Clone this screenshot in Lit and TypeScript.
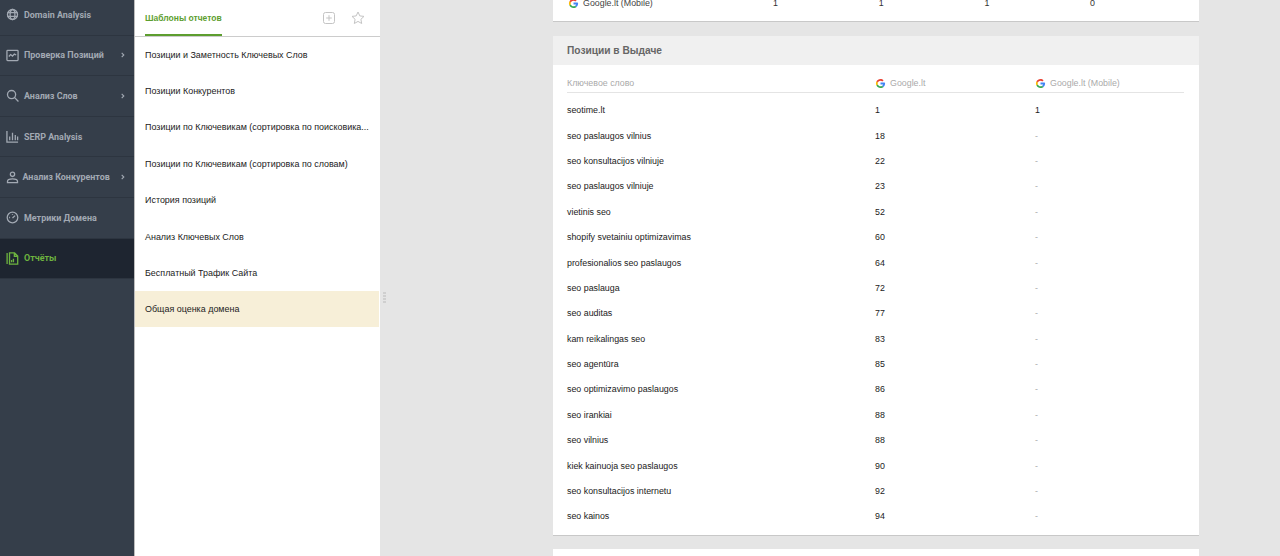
import { LitElement, html, css, svg } from "lit";
import { customElement } from "lit/decorators.js";

const ICONS: Record<string, unknown> = {
  globe: svg`<circle cx="7" cy="7" r="5.400"/><ellipse cx="7" cy="7" rx="2.600" ry="5.400"/><path d="M1.600 5h10.800M1.600 9h10.800"/>`,
  chart: svg`<rect x="1" y="1.500" width="12" height="11" rx=".8"/><path d="M3 8l2-2 2 1.600L9 5.500l2 1"/>`,
  search: svg`<circle cx="6" cy="6" r="4.400"/><path d="M9.300 9.300L13.400 13.400"/>`,
  bars: svg`<path d="M1 1v12h12M4 11V7M7 11V3M10 11V5.500M12.500 11V7"/>`,
  user: svg`<circle cx="7" cy="3.600" r="2.300"/><path d="M1.600 12.600v-1.400c0-1.800 2-2.700 5.400-2.700s5.400.9 5.400 2.700v1.400z"/>`,
  gauge: svg`<circle cx="7" cy="7" r="5.700"/><path d="M7 7.600l2.800-2.600M3.400 7h1M7 3.400v1"/>`,
  report: svg`<path d="M1.200 1.200v11.600M3.800 1h5.400l3.400 3.400V13H3.800zM9 1v3.600h3.600M6 11V8.600M8 11V7.400"/>`,
};

const G = svg`<path fill="#fbbc05" d="M6.300 14.700C4.900 17.400 4 20.600 4 24s.9 6.500 2.200 9.100l6.500-5C12.200 26.800 12 25.400 12 24s.3-3.100.9-4.500z"/><path fill="#ea4335" d="M6.300 14.700l6.600 4.800C14.700 15.100 19 12 24 12c3.100 0 5.800 1.200 7.900 3l5.700-5.700C34 6.100 29.300 4 24 4 16.300 4 9.700 8.300 6.300 14.700z"/><path fill="#34a853" d="M24 44c5.200 0 9.900-2 13.400-5.200l-6.200-5.200C29.200 35.100 26.700 36 24 36c-5.200 0-9.600-3.300-11.300-7.900l-6.500 5C9.500 39.600 16.200 44 24 44z"/><path fill="#4285f4" d="M43.600 20.500H42V20H24v8h11.300c-.8 2.200-2.200 4.200-4.100 5.600l6.200 5.200C37 39.200 44 34 44 24c0-1.300-.1-2.700-.4-3.500z"/>`;

const NAV = [
  { t: "Domain Analysis", i: "globe" },
  { t: "Проверка Позиций", i: "chart", a: 1 },
  { t: "Анализ Слов", i: "search", a: 1 },
  { t: "SERP Analysis", i: "bars" },
  { t: "Анализ Конкурентов", i: "user", a: 1, tight: 1 },
  { t: "Метрики Домена", i: "gauge" },
  { t: "Отчёты", i: "report", on: 1 },
];

const TEMPLATES = [
  "Позиции и Заметность Ключевых Слов",
  "Позиции Конкурентов",
  "Позиции по Ключевикам (сортировка по поисковика...",
  "Позиции по Ключевикам (сортировка по словам)",
  "История позиций",
  "Анализ Ключевых Слов",
  "Бесплатный Трафик Сайта",
  "Общая оценка домена",
];

const ROWS: [string, string, string][] = [
  ["seotime.lt", "1", "1"],
  ["seo paslaugos vilnius", "18", "-"],
  ["seo konsultacijos vilniuje", "22", "-"],
  ["seo paslaugos vilniuje", "23", "-"],
  ["vietinis seo", "52", "-"],
  ["shopify svetainiu optimizavimas", "60", "-"],
  ["profesionalios seo paslaugos", "64", "-"],
  ["seo paslauga", "72", "-"],
  ["seo auditas", "77", "-"],
  ["kam reikalingas seo", "83", "-"],
  ["seo agentūra", "85", "-"],
  ["seo optimizavimo paslaugos", "86", "-"],
  ["seo irankiai", "88", "-"],
  ["seo vilnius", "88", "-"],
  ["kiek kainuoja seo paslaugos", "90", "-"],
  ["seo konsultacijos internetu", "92", "-"],
  ["seo kainos", "94", "-"],
];

@customElement("app-root")
export class AppRoot extends LitElement {
  static styles = css`
    :host { display: block; width: 1280px; height: 556px; overflow: hidden; background: #e5e5e5;
      font-family: "Liberation Sans", Arial, sans-serif; color: #222; }
    .layout { display: flex; height: 556px; }
    .side { width: 134px; flex: none; background: #353e4a; overflow: hidden; }
    .nav { margin-top: -5px; }
    .nav-item { height: 40.6px; box-sizing: border-box; display: flex; align-items: center; padding: 0 9.5px 0 6px;
      border-bottom: 1px solid #2d3540; color: #a2a9b3; font: 700 8.95px Roboto, sans-serif; }
    .nav-item.on { background: #1e2530; color: #6db33f; }
    .nav-icon { width: 13px; height: 13px; flex: none; margin-right: 5px; fill: none; stroke: currentColor; stroke-width: 1.4; }
    .nav-label { flex: 1; white-space: nowrap; }
    .tight .nav-label { margin-left: -1.5px; }
    .chev { width: 3.500px; height: 6px; fill: none; stroke: currentColor; stroke-width: 1.6; flex: none; }
    .panel { width: 245px; flex: none; border-left: 1px solid #bdbdbd; background: #fff; }
    .tabs { height: 36px; display: flex; align-items: stretch; padding-left: 10px; border-bottom: 1px solid #ccc; }
    .tab { color: #5d9e2f; font-weight: 700; font-size: 8.5px; display: flex; align-items: center; border-bottom: 2px solid #5d9e2f; padding-top: 1px; box-sizing: border-box; height: 36px; }
    .tab-icons { margin-left: auto; display: flex; align-items: center; gap: 15px; padding-right: 15px; }
    .tab-icons svg { width: 14px; height: 14px; fill: none; stroke: #c4c4c4; stroke-width: 1; }
    .list { margin-top: -0.6px; }
    .tpl { height: 36.4px; display: flex; align-items: center; padding-left: 10px; font-size: 8.95px; color: #222; white-space: nowrap; box-sizing: border-box; margin-right: 1px; }
    .tpl.sel { background: #f7efd8; height: 35.6px; }
    .grip { width: 173px; flex: none; display: flex; align-items: flex-start; }
    .dots { margin: 292px 0 0 3px; display: grid; gap: 1px; }
    .dots i { display: block; width: 3px; height: 2px; background: #cfcfcf; }
    .main { flex: 1; overflow: hidden; }
    .card { width: 646px; background: #fff; border-bottom: 1px solid #c8c8c8; }
    .card-top { height: 21px; display: flex; align-items: flex-start; font-size: 8.85px; color: #333; }
    .top-name { display: flex; align-items: center; width: 205px; padding-left: 15px; height: 6px; gap: 4px; color: #444; }
    .top-num { width: 105.7px; height: 6px; display: flex; align-items: center; }
    .g { width: 11px; height: 11px; flex: none; }
    .card-pos { margin-top: 14px; }
    .card-title { height: 29px; background: #f0f0f0; display: flex; align-items: center; padding-left: 14px; font-size: 10.2px; font-weight: 700; color: #666; }
    .body { padding: 9px 15px 5.5px 14px; }
    .row { display: grid; grid-template-columns: 308px 160px 1fr; align-items: center; height: 25.4px; font-size: 8.85px; color: #222; }
    .head { height: 18px; border-bottom: 1px solid #e4e4e4; color: #aaa; margin-bottom: 4.5px; }
    .head span { display: flex; align-items: center; gap: 4px; }
    .dash { color: #aaa; }
    .card-next { margin-top: 13.5px; height: 40px; border: 0; }
  `;

  render() {
    const dots = [0, 1, 2, 3];
    const g = html`<svg class="g" viewBox="0 0 48 48">${G}</svg>`;
    return html`<div class="layout">
      <nav class="side"><div class="nav">
        ${NAV.map((n) => html`<div class="nav-item ${n.on ? "on" : ""} ${n.tight ? "tight" : ""}">
          <svg class="nav-icon" viewBox="0 0 14 14">${ICONS[n.i]}</svg>
          <span class="nav-label">${n.t}</span>
          ${n.a ? html`<svg class="chev" viewBox="0 0 5 8"><path d="M1 1l3 3-3 3"/></svg>` : ""}
        </div>`)}
      </div></nav>
      <section class="panel">
        <div class="tabs">
          <div class="tab">Шаблоны отчетов</div>
          <div class="tab-icons">
            <svg viewBox="0 0 14 14"><rect x="1.500" y="1.500" width="11" height="11" rx="2"/><path d="M7 4.200v5.600M4.200 7h5.600"/></svg>
            <svg viewBox="0 0 14 14"><path d="M7 1l1.800 3.900 4.200.5-3.100 2.900.8 4.200L7 10.400l-3.700 2.100.8-4.200L1 5.400l4.200-.5z"/></svg>
          </div>
        </div>
        <div class="list">${TEMPLATES.map((t, i) => html`<div class="tpl ${i === 7 ? "sel" : ""}">${t}</div>`)}</div>
      </section>
      <div class="grip"><div class="dots">${dots.map(() => html`<i></i>`)}</div></div>
      <main class="main">
        <div class="card card-top">
          <div class="top-name">${g}Google.lt (Mobile)</div>
          <div class="top-num">1</div><div class="top-num">1</div><div class="top-num">1</div><div class="top-num">0</div>
        </div>
        <div class="card card-pos">
          <div class="card-title">Позиции в Выдаче</div>
          <div class="body">
            <div class="row head">
              <span>Ключевое слово</span>
              <span>${g}Google.lt</span>
              <span>${g}Google.lt (Mobile)</span>
            </div>
            ${ROWS.map((r) => html`<div class="row"><span>${r[0]}</span><span>${r[1]}</span><span class="${r[2] === "-" ? "dash" : ""}">${r[2]}</span></div>`)}
          </div>
        </div>
        <div class="card card-next"></div>
      </main>
    </div>`;
  }
}
